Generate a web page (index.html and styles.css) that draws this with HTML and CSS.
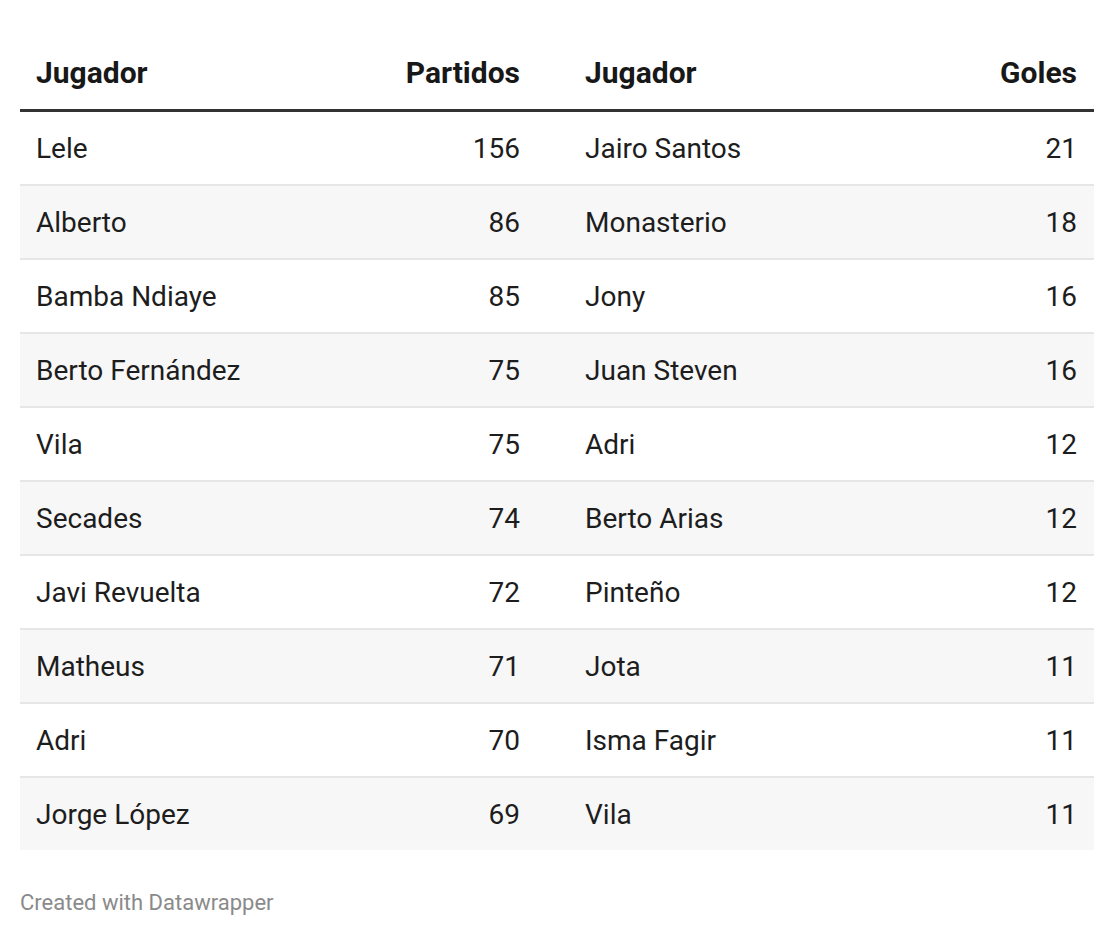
FILE: index.html
```html
<!DOCTYPE html>
<html lang="es">
<head>
<meta charset="utf-8">
<link rel="stylesheet" href="styles.css">
</head>
<body>
<div class="chart">
  <div class="table">
    <div class="row head">
      <div class="c c1">Jugador</div>
      <div class="c c2 num">Partidos</div>
      <div class="c c3">Jugador</div>
      <div class="c c4 num">Goles</div>
    </div>
    <div class="row"><div class="c c1">Lele</div><div class="c c2 num">156</div><div class="c c3">Jairo Santos</div><div class="c c4 num">21</div></div>
    <div class="row alt"><div class="c c1">Alberto</div><div class="c c2 num">86</div><div class="c c3">Monasterio</div><div class="c c4 num">18</div></div>
    <div class="row"><div class="c c1">Bamba Ndiaye</div><div class="c c2 num">85</div><div class="c c3">Jony</div><div class="c c4 num">16</div></div>
    <div class="row alt"><div class="c c1">Berto Fernández</div><div class="c c2 num">75</div><div class="c c3">Juan Steven</div><div class="c c4 num">16</div></div>
    <div class="row"><div class="c c1">Vila</div><div class="c c2 num">75</div><div class="c c3">Adri</div><div class="c c4 num">12</div></div>
    <div class="row alt"><div class="c c1">Secades</div><div class="c c2 num">74</div><div class="c c3">Berto Arias</div><div class="c c4 num">12</div></div>
    <div class="row"><div class="c c1">Javi Revuelta</div><div class="c c2 num">72</div><div class="c c3">Pinteño</div><div class="c c4 num">12</div></div>
    <div class="row alt"><div class="c c1">Matheus</div><div class="c c2 num">71</div><div class="c c3">Jota</div><div class="c c4 num">11</div></div>
    <div class="row"><div class="c c1">Adri</div><div class="c c2 num">70</div><div class="c c3">Isma Fagir</div><div class="c c4 num">11</div></div>
    <div class="row alt last"><div class="c c1">Jorge López</div><div class="c c2 num">69</div><div class="c c3">Vila</div><div class="c c4 num">11</div></div>
  </div>
  <div class="footer">Created with Datawrapper</div>
</div>
</body>
</html>
```

FILE: styles.css
```css
html, body {
  margin: 0;
  padding: 0;
  background: #ffffff;
}
body {
  font-family: Roboto, "Liberation Sans", sans-serif;
  color: #1d1d1d;
}
.chart {
  padding: 40px 20px 0 20px;
}
.table {
  width: 1074px;
}
.row {
  display: grid;
  grid-template-columns: 360px 157px 400px 157px;
  align-items: center;
  border-bottom: 2px solid #e6e6e6;
  font-size: 28px;
  line-height: 1;
  padding-top: 2px;
  box-sizing: border-box;
  height: 74px;
}
.row.alt {
  background: #f7f7f7;
}
.row.last {
  border-bottom: none;
  height: 72px;
}
.row.head {
  height: 72px;
  padding-top: 0;
  padding-bottom: 4px;
  border-bottom: 3px solid #333333;
  font-weight: 700;
  font-size: 30px;
  color: #181818;
}
.c {
  padding: 0 17px 0 16px;
  white-space: nowrap;
}
.c3 {
  padding-left: 48px;
}
.num {
  text-align: right;
}
.footer {
  margin-top: 40px;
  font-size: 22px;
  color: #8a8a8a;
}
```
